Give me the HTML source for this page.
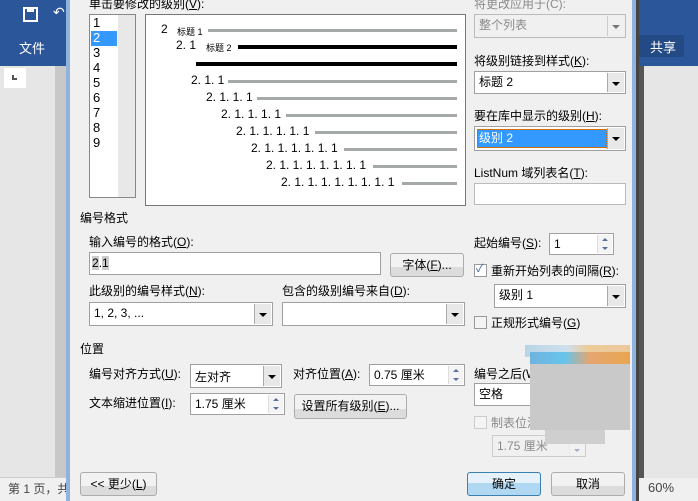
<!DOCTYPE html>
<html><head><meta charset="utf-8"><style>
*{margin:0;padding:0;box-sizing:border-box}
body{width:698px;height:501px;overflow:hidden;position:relative;background:#e6e6e6;font-family:"Liberation Sans","Noto Sans CJK SC",sans-serif;font-size:12px;color:#000}
.a{position:absolute;white-space:nowrap}
.box{position:absolute;background:#fff;border:1px solid #a0a0a0}
.dd{position:absolute;right:1px;top:1px;bottom:1px;width:17px;background:#e8e8e8;border-left:1px solid #aaa}
.dd:after{content:"";position:absolute;left:4px;top:9px;border-left:4px solid transparent;border-right:4px solid transparent;border-top:4px solid #000}
.sp{position:absolute;right:1px;top:1px;bottom:1px;width:15px;background:#f4f4f4;border-left:1px solid #ddd}
.sp:before{content:"";position:absolute;left:4px;top:3px;border-left:3px solid transparent;border-right:3px solid transparent;border-bottom:3px solid #5a6f99}
.sp:after{content:"";position:absolute;left:4px;bottom:3px;border-left:3px solid transparent;border-right:3px solid transparent;border-top:3px solid #5a6f99}
.btn{position:absolute;border:1px solid #acacac;border-radius:3px;background:linear-gradient(#f2f2f2 60%,#dcdcdc 60%);text-align:center;line-height:22px}
.t{position:absolute;padding-left:4px;line-height:21px}
.g{color:#8a8a8a}
.ln{position:absolute;height:3px;background:#a5aaa7}
.n{position:absolute;font-size:12px;white-space:pre}
.s{font-size:9px}
.cb{position:absolute;width:13px;height:13px;border:1px solid #999;background:#fff}
</style></head><body>
<div class="a" style="left:0;top:0;width:66px;height:66px;background:#2b579a"></div>
<div class="a" style="left:23px;top:7px;width:15px;height:15px;border:2px solid #fff"></div>
<div class="a" style="left:27px;top:7px;width:7px;height:5px;background:#fff"></div>
<div class="a" style="left:53px;top:4px;color:#fff;font-size:14px">↶</div>
<div class="a" style="left:19px;top:38px;color:#fff;font-size:13px">文件</div>
<div class="a" style="left:0;top:66px;width:66px;height:412px;background:#e6e6e6"></div>
<div class="a" style="left:4px;top:68px;width:22px;height:20px;background:#fff"></div>
<div class="a" style="left:12px;top:75px;width:5px;height:5px;border-left:2px solid #555;border-bottom:2px solid #555"></div>
<div class="a" style="left:55px;top:66px;width:11px;height:412px;background:#c8c8c8"></div>
<div class="a" style="left:0;top:477px;width:68px;height:24px;background:#f0f0f0;border-top:1px solid #ccc;color:#444;line-height:22px;padding-left:8px">第 1 页，共</div>
<div class="a" style="left:638px;top:0;width:60px;height:66px;background:#2b579a"></div>
<div class="a" style="left:638px;top:35px;width:46px;height:22px;background:#234a84"></div>
<div class="a" style="left:650px;top:37px;color:#fff;font-size:13px">共享</div>
<div class="a" style="left:638px;top:66px;width:6px;height:412px;background:#555"></div>
<div class="a" style="left:638px;top:478px;width:60px;height:23px;background:#f0f0f0;color:#444;line-height:20px;padding-left:10px;font-size:13px">60%</div>
<div class="a" style="left:66px;top:0;width:4px;height:501px;background:#8fb3dc"></div>
<div class="a" style="left:70px;top:0;width:563px;height:501px;background:#f0f0f0"></div>
<div class="a" style="left:632px;top:0;width:4px;height:501px;background:#8fb3dc"></div>
<div class="a" style="left:636px;top:0;width:3px;height:501px;background:#444"></div>

<div class="a" style="left:89px;top:-5px">单击要修改的级别(<u>V</u>):</div>
<div class="box" style="left:89px;top:14px;width:47px;height:184px;border-color:#888"></div>
<div class="a" style="left:118px;top:15px;width:17px;height:182px;background:#e8e8e8"></div>
<div class="a" style="left:91px;top:31px;width:26px;height:15px;background:#3399ff"></div>
<div class="a" style="left:93px;top:15px;line-height:15px;font-size:13px">1<br><span style="color:#fff">2</span><br>3<br>4<br>5<br>6<br>7<br>8<br>9</div>
<div class="box" style="left:145px;top:14px;width:321px;height:192px;border-color:#777"></div>
<div class="n" style="left:161px;top:22px">2</div><div class="a s" style="left:177px;top:25px">标题 1</div><div class="ln" style="left:208px;top:29px;width:249px"></div>
<div class="n" style="left:176px;top:38px">2. 1</div><div class="a s" style="left:206px;top:41px">标题 2</div><div class="ln" style="left:238px;top:45px;width:219px;height:4px;background:#000"></div>
<div class="ln" style="left:196px;top:62px;width:261px;height:4px;background:#000"></div>
<div class="n" style="left:191px;top:73px">2. 1. 1</div><div class="ln" style="left:228px;top:80px;width:229px"></div>
<div class="n" style="left:206px;top:90px">2. 1. 1. 1</div><div class="ln" style="left:257px;top:97px;width:200px"></div>
<div class="n" style="left:221px;top:107px">2. 1. 1. 1. 1</div><div class="ln" style="left:286px;top:114px;width:171px"></div>
<div class="n" style="left:236px;top:124px">2. 1. 1. 1. 1. 1</div><div class="ln" style="left:315px;top:131px;width:142px"></div>
<div class="n" style="left:251px;top:141px">2. 1. 1. 1. 1. 1. 1</div><div class="ln" style="left:344px;top:148px;width:113px"></div>
<div class="n" style="left:266px;top:158px">2. 1. 1. 1. 1. 1. 1. 1</div><div class="ln" style="left:373px;top:165px;width:84px"></div>
<div class="n" style="left:281px;top:175px">2. 1. 1. 1. 1. 1. 1. 1. 1</div><div class="ln" style="left:402px;top:182px;width:55px"></div>

<div class="a g" style="left:474px;top:-5px">将更改应用于(C):</div>
<div class="box" style="left:474px;top:14px;width:152px;height:24px;background:#f0f0f0;border-color:#bbb"><span class="t g">整个列表</span><div class="dd" style="background:#f0f0f0;opacity:.5"></div></div>
<div class="a" style="left:474px;top:52px">将级别链接到样式(<u>K</u>):</div>
<div class="box" style="left:474px;top:71px;width:152px;height:23px"><span class="t">标题 2</span><div class="dd"></div></div>
<div class="a" style="left:474px;top:107px">要在库中显示的级别(<u>H</u>):</div>
<div class="box" style="left:474px;top:126px;width:152px;height:25px"><div class="a" style="left:2px;top:2px;width:130px;height:19px;background:#3399ff;border:1px dotted #c60"></div><span class="t" style="color:#fff;position:absolute;top:1px">级别 2</span><div class="dd"></div></div>
<div class="a" style="left:474px;top:164px">ListNum 域列表名(<u>T</u>):</div>
<div class="box" style="left:474px;top:183px;width:152px;height:22px;border-color:#bbb"></div>

<div class="a" style="left:80px;top:209px">编号格式</div>
<div class="a" style="left:89px;top:233px">输入编号的格式(<u>O</u>):</div>
<div class="box" style="left:89px;top:252px;width:292px;height:23px"><span class="t" style="padding-left:2px"><span style="background:#ccc">2</span>.<span style="background:#ccc">1</span></span></div>
<div class="btn" style="left:390px;top:253px;width:74px;height:24px">字体(<u>F</u>)...</div>
<div class="a" style="left:89px;top:282px">此级别的编号样式(<u>N</u>):</div>
<div class="box" style="left:89px;top:302px;width:184px;height:24px"><span class="t">1, 2, 3, ...</span><div class="dd"></div></div>
<div class="a" style="left:282px;top:282px">包含的级别编号来自(<u>D</u>):</div>
<div class="box" style="left:282px;top:302px;width:183px;height:24px"><div class="dd"></div></div>
<div class="a" style="left:474px;top:234px">起始编号(<u>S</u>):</div>
<div class="box" style="left:549px;top:233px;width:65px;height:22px"><span class="t">1</span><div class="sp"></div></div>
<div class="cb" style="left:474px;top:264px"></div><div class="a" style="left:476px;top:260px;color:#3a5fa0;font-size:11px">✓</div>
<div class="a" style="left:491px;top:262px">重新开始列表的间隔(<u>R</u>):</div>
<div class="box" style="left:494px;top:284px;width:132px;height:24px"><span class="t">级别 1</span><div class="dd"></div></div>
<div class="cb" style="left:474px;top:316px;background:#f4f4f4"></div>
<div class="a" style="left:491px;top:314px">正规形式编号(<u>G</u>)</div>
<div class="a" style="left:80px;top:340px">位置</div>
<div class="a" style="left:89px;top:365px">编号对齐方式(<u>U</u>):</div>
<div class="box" style="left:190px;top:364px;width:92px;height:24px"><span class="t" style="top:2px">左对齐</span><div class="dd"></div></div>
<div class="a" style="left:293px;top:365px">对齐位置(<u>A</u>):</div>
<div class="box" style="left:369px;top:364px;width:96px;height:22px"><span class="t">0.75 厘米</span><div class="sp"></div></div>
<div class="a" style="left:89px;top:394px">文本缩进位置(<u>I</u>):</div>
<div class="box" style="left:190px;top:393px;width:95px;height:22px"><span class="t">1.75 厘米</span><div class="sp"></div></div>
<div class="btn" style="left:294px;top:394px;width:113px;height:25px">设置所有级别(<u>E</u>)...</div>
<div class="a" style="left:474px;top:365px">编号之后(W)</div>
<div class="box" style="left:474px;top:383px;width:152px;height:23px"><span class="t">空格</span></div>
<div class="cb" style="left:474px;top:416px;background:#f4f4f4;border-color:#ccc"></div>
<div class="a g" style="left:491px;top:414px">制表位添加位置(B):</div>
<div class="box" style="left:492px;top:435px;width:94px;height:22px;background:#f0f0f0;border-color:#ccc"><span class="t g">1.75 厘米</span><div class="sp" style="opacity:.5"></div></div>
<div class="a" style="left:525px;top:345px;width:105px;height:12px;background:linear-gradient(90deg,#b8d4e6,#cde0ec 40%,#eccb99 60%,#ecc79a)"></div>
<div class="a" style="left:530px;top:352px;width:100px;height:12px;background:linear-gradient(90deg,#6fb3de,#67c4ec 35%,#e5a56f 60%,#eaa552)"></div>
<div class="a" style="left:530px;top:364px;width:100px;height:66px;background:#c9c9c9"></div>
<div class="a" style="left:545px;top:430px;width:60px;height:14px;background:#cfcfcf"></div>

<div class="btn" style="left:80px;top:472px;width:77px;height:24px">&lt;&lt; 更少(<u>L</u>)</div>
<div class="btn" style="left:467px;top:472px;width:74px;height:24px;border-color:#3c7fb1;background:linear-gradient(#e5f1fb 45%,#b1d8f2 45%)">确定</div>
<div class="btn" style="left:551px;top:472px;width:74px;height:24px">取消</div>
</body></html>
